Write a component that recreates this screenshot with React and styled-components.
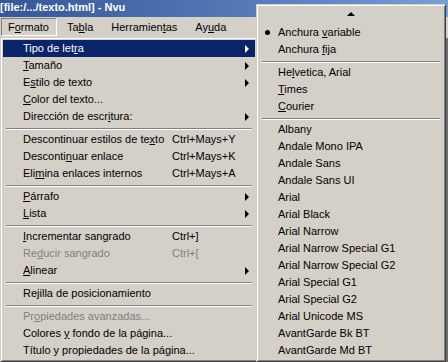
import React from "react";
import styled, { createGlobalStyle } from "styled-components";

const Global = createGlobalStyle`
  html, body { margin: 0; padding: 0; }
  body {
    background: #6f6f6f;
    font-family: "Liberation Sans", Arial, sans-serif;
    font-size: 11px;
    color: #000;
  }
`;

const Window = styled.div`
  position: relative;
  width: 448px;
  height: 362px;
  overflow: hidden;
  display: flex;
  flex-direction: column;
  background: #6f6f6f;
`;

const TitleBar = styled.div`
  height: 17px;
  flex: none;
  background: linear-gradient(90deg, #34579a 0%, #5a7cba 60%, #7b9fd6 100%);
  color: #fff;
  font-weight: bold;
  font-size: 11px;
  line-height: 14px;
  padding-left: 0;
  white-space: nowrap;
`;

const MenuBar = styled.div`
  height: 20px;
  flex: none;
  background: #d4d0c8;
  display: flex;
  align-items: flex-start;
  gap: 2px;
  padding: 1px 0 0 1px;
`;

const BarItem = styled.div`
  height: 18px;
  box-sizing: border-box;
  line-height: 16px;
  padding: 0 7px 0 ${(p) => (p.$pressed ? "6px" : "7px")};
  border: 1px solid transparent;
  border-color: ${(p) =>
    p.$pressed ? "#808080 #ffffff #ffffff #808080" : "transparent"};
  white-space: nowrap;
`;

const Workspace = styled.div`
  flex: 1;
  background: #6f6f6f;
`;

const Popup = styled.div`
  position: absolute;
  top: ${(p) => p.$top}px;
  left: ${(p) => p.$left}px;
  width: ${(p) => p.$width}px;
  box-sizing: border-box;
  background: #d4d0c8;
  border: 1px solid;
  border-color: #d4d0c8 #404040 #404040 #d4d0c8;
  box-shadow: inset 1px 1px #ffffff, inset -1px -1px #808080;
  padding: 2px;
  z-index: ${(p) => p.$z};
`;

const Row = styled.div`
  display: grid;
  grid-template-columns: ${(p) => p.$cols};
  align-items: center;
  height: 17px;
  line-height: 17px;
  white-space: nowrap;
  background: ${(p) => (p.$active ? "#0a246a" : "transparent")};
  color: ${(p) => (p.$active ? "#ffffff" : p.$disabled ? "#808080" : "#000")};
`;

const Check = styled.span`
  display: flex;
  align-items: center;
  justify-content: center;
  padding-right: 2px;
`;

const Bullet = styled.span`
  width: 5px;
  height: 5px;
  border-radius: 50%;
  background: currentColor;
`;

const Label = styled.span`
  overflow: visible;
`;

const Shortcut = styled.span``;

const Arrow = styled.span`
  width: 0;
  height: 0;
  border-left: 4px solid currentColor;
  border-top: 4px solid transparent;
  border-bottom: 4px solid transparent;
`;

const Separator = styled.div`
  height: 6px;
  box-sizing: border-box;
  padding-top: 3px;
  margin: 0 3px;
  &::before {
    content: "";
    display: block;
    border-top: 1px solid #808080;
    border-bottom: 1px solid #ffffff;
  }
`;

const ScrollRow = styled.div`
  height: 17px;
  display: flex;
  justify-content: center;
  padding-top: 5px;
  box-sizing: border-box;
`;

const UpTriangle = styled.span`
  width: 0;
  height: 0;
  border-bottom: 4px solid #000;
  border-left: 4px solid transparent;
  border-right: 4px solid transparent;
`;

function Mnemonic({ text }) {
  const i = text.indexOf("&");
  if (i < 0) return text;
  return (
    <>
      {text.slice(0, i)}
      <u>{text[i + 1]}</u>
      {text.slice(i + 2)}
    </>
  );
}

const mainItems = [
  { l: "Tipo de let&ra", arrow: true, active: true },
  { l: "&Tamaño", arrow: true },
  { l: "E&stilo de texto", arrow: true },
  { l: "&Color del texto..." },
  { l: "Dirección de escr&itura:", arrow: true },
  "sep",
  { l: "Descontinuar estilos de te&xto", k: "Ctrl+Mays+Y" },
  { l: "Desconti&nuar enlace", k: "Ctrl+Mays+K" },
  { l: "Eli&mina enlaces internos", k: "Ctrl+Mays+A" },
  "sep",
  { l: "&Párrafo", arrow: true },
  { l: "&Lista", arrow: true },
  "sep",
  { l: "&Incrementar sangrado", k: "Ctrl+]" },
  { l: "Re&ducir sangrado", k: "Ctrl+[", disabled: true },
  { l: "&Alinear", arrow: true },
  "sep",
  { l: "Re&jilla de posicionamiento" },
  "sep",
  { l: "Pr&opiedades avanzadas...", disabled: true },
  { l: "Colores &y fondo de la página..." },
  { l: "Título y propiedades de la pá&gina..." },
];

const subItems = [
  { l: "Anchura &variable", bullet: true },
  { l: "Anchura &fija" },
  "sep",
  { l: "He&lvetica, Arial" },
  { l: "&Times" },
  { l: "&Courier" },
  "sep",
  { l: "Albany" },
  { l: "Andale Mono IPA" },
  { l: "Andale Sans" },
  { l: "Andale Sans UI" },
  { l: "Arial" },
  { l: "Arial Black" },
  { l: "Arial Narrow" },
  { l: "Arial Narrow Special G1" },
  { l: "Arial Narrow Special G2" },
  { l: "Arial Special G1" },
  { l: "Arial Special G2" },
  { l: "Arial Unicode MS" },
  { l: "AvantGarde Bk BT" },
  { l: "AvantGarde Md BT" },
];

export default function App() {
  return (
    <>
      <Global />
      <Window>
        <TitleBar>[file:/.../texto.html] - Nvu</TitleBar>
        <MenuBar>
          <BarItem $pressed>
            <Mnemonic text="F&ormato" />
          </BarItem>
          <BarItem>
            <Mnemonic text="Ta&bla" />
          </BarItem>
          <BarItem>
            <Mnemonic text="Herramien&tas" />
          </BarItem>
          <BarItem>
            <Mnemonic text="Ay&uda" />
          </BarItem>
        </MenuBar>
        <Workspace />

        <Popup $top={37} $left={0} $width={258} $z={1}>
          {mainItems.map((it, i) =>
            it === "sep" ? (
              <Separator key={i} />
            ) : (
              <Row
                key={i}
                $cols="20px 149px 1fr 10px"
                $active={it.active}
                $disabled={it.disabled}
              >
                <Check />
                <Label>
                  <Mnemonic text={it.l} />
                </Label>
                <Shortcut>{it.k || ""}</Shortcut>
                {it.arrow ? <Arrow /> : <span />}
              </Row>
            )
          )}
        </Popup>

        <Popup $top={4} $left={256} $width={190} $z={2}>
          <ScrollRow>
            <UpTriangle />
          </ScrollRow>
          {subItems.map((it, i) =>
            it === "sep" ? (
              <Separator key={i} />
            ) : (
              <Row key={i} $cols="19px 1fr">
                <Check>{it.bullet ? <Bullet /> : null}</Check>
                <Label>
                  <Mnemonic text={it.l} />
                </Label>
              </Row>
            )
          )}
        </Popup>
      </Window>
    </>
  );
}
